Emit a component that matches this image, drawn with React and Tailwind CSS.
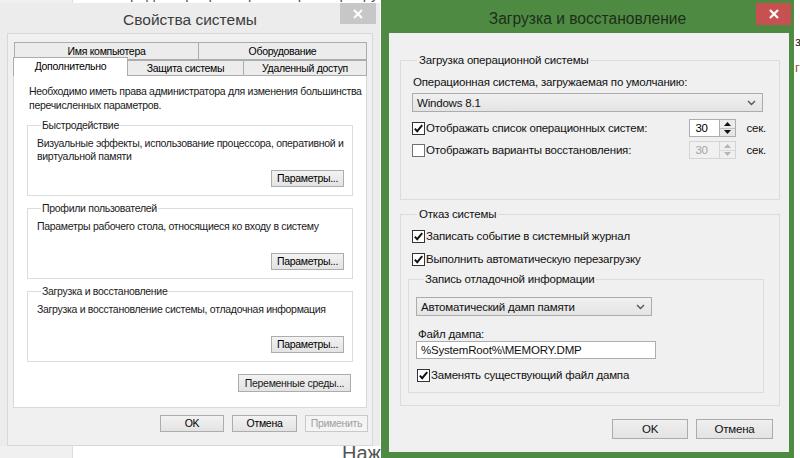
import React from "react";

const Check = ({ checked }) => (
  <span
    className={`flex items-center justify-center w-[13px] h-[13px] shrink-0 bg-white border ${
      checked ? "border-[#333333]" : "border-[#707070]"
    }`}
  >
    {checked && (
      <svg width="11" height="11" viewBox="0 0 11 11">
        <path d="M1.8 5.6 L4.2 8.2 L9.2 2.2" fill="none" stroke="#111" strokeWidth="1.9" />
      </svg>
    )}
  </span>
);

const Chevron = () => (
  <svg width="9" height="6" viewBox="0 0 9 6">
    <path d="M1 1 L4.5 4.5 L8 1" fill="none" stroke="#555" strokeWidth="1.4" />
  </svg>
);

const Arrow = ({ up, disabled }) => (
  <svg width="7" height="4" viewBox="0 0 7 4">
    <path d={up ? "M0 4 L3.5 0 L7 4 Z" : "M0 0 L3.5 4 L7 0 Z"} fill={disabled ? "#b5b5b5" : "#111"} />
  </svg>
);

const Spinner = ({ disabled }) => (
  <div className="flex h-[18px]">
    <div
      className={`w-[31px] flex items-center pl-[5px] border ${
        disabled ? "bg-[#f0f0f0] border-[#d5d5d5] text-[#a3a3a3]" : "bg-white border-[#abadb3] text-black"
      }`}
    >
      30
    </div>
    <div className={`w-[16px] flex flex-col border border-l-0 ${disabled ? "border-[#d5d5d5]" : "border-[#abadb3]"}`}>
      <span
        className={`flex-1 flex items-center justify-center border-b ${
          disabled ? "bg-[#f0f0f0] border-[#dadada]" : "bg-[#ececec] border-[#c0c0c0]"
        }`}
      >
        <Arrow up disabled={disabled} />
      </span>
      <span className={`flex-1 flex items-center justify-center ${disabled ? "bg-[#f0f0f0]" : "bg-[#e6e6e6]"}`}>
        <Arrow disabled={disabled} />
      </span>
    </div>
  </div>
);

const LeftBtn = ({ children, w = "w-[73px]", disabled }) => (
  <button
    className={`${w} h-[17px] flex items-center justify-center border text-[10.5px] leading-none ${
      disabled
        ? "border-[#c9c9c9] bg-[#f4f4f4] text-[#a0a0a0]"
        : "border-[#acacac] bg-gradient-to-b from-[#f2f2f2] to-[#e3e3e3] text-black"
    }`}
  >
    {children}
  </button>
);

const Group = ({ title, children }) => (
  <fieldset className="mx-[13px] border border-[#dcdcdc] px-[8px] pb-[8px]">
    <legend className="ml-[5px] px-[1px] leading-[13px]">{title}</legend>
    <div className="mt-[5px] h-[26px] leading-[13px] pl-[1px] whitespace-nowrap">{children}</div>
    <div className="mt-[7px] flex justify-end">
      <LeftBtn>Параметры...</LeftBtn>
    </div>
  </fieldset>
);

const SystemProperties = () => (
  <div className="absolute left-0 top-[3px] w-[380px] h-[443px] bg-[#ececec] flex flex-col">
    <div className="relative h-[30px] flex items-center justify-center">
      <span className="text-[15.5px] text-[#3d3d3d] pt-[4px]">Свойства системы</span>
      <div className="absolute right-[4px] top-0 w-[36px] h-[21px] bg-[#c7c7c7] flex items-center justify-center">
        <svg width="10" height="10" viewBox="0 0 10 10">
          <path d="M1 1 L9 9 M9 1 L1 9" stroke="#fff" strokeWidth="2" />
        </svg>
      </div>
    </div>

    <div className="mx-[7px] flex-1 bg-[#f0f0f0] border border-[#d8d8d8] pl-[5px] pt-[8px] text-[10.5px] tracking-[-0.3px]">
      {/* tabs */}
      <div className="w-[354px] whitespace-nowrap">
        <div className="flex h-[18px] ml-[1px]">
          <div className="w-[185px] border border-[#acacac] bg-[#ececec] text-center leading-[14px] pt-[1px]">
            Имя компьютера
          </div>
          <div className="w-[168px] border border-l-0 border-[#acacac] bg-[#ececec] text-center leading-[14px] pt-[1px]">
            Оборудование
          </div>
        </div>
        <div className="flex items-end h-[19px] -mt-[3px]">
          <div className="relative z-10 w-[115px] h-[19px] border border-b-0 border-[#acacac] bg-white text-center leading-[16px]">
            Дополнительно
          </div>
          <div className="w-[116px] h-[16px] border border-l-0 border-[#acacac] bg-[#ececec] text-center leading-[14px]">
            Защита системы
          </div>
          <div className="w-[123px] h-[16px] border border-l-0 border-[#acacac] bg-[#ececec] text-center leading-[14px]">
            Удаленный доступ
          </div>
        </div>

        <div className="-mt-px h-[333px] bg-white border border-[#d9d9d9] text-[#1a1a1a]">
          <p className="pt-[8px] pl-[15px] leading-[14px]">
            Необходимо иметь права администратора для изменения большинства
            <br />
            перечисленных параметров.
          </p>

          <div className="mt-[7px]">
            <Group title="Быстродействие">
              Визуальные эффекты, использование процессора, оперативной и
              <br />
              виртуальной памяти
            </Group>
          </div>
          <div className="mt-[6px]">
            <Group title="Профили пользователей">Параметры рабочего стола, относящиеся ко входу в систему</Group>
          </div>
          <div className="mt-[6px]">
            <Group title="Загрузка и восстановление">Загрузка и восстановление системы, отладочная информация</Group>
          </div>

          <div className="mt-[12px] mr-[15px] flex justify-end">
            <button className="w-[113px] h-[18px] border border-[#acacac] bg-gradient-to-b from-[#f2f2f2] to-[#e3e3e3] text-[10.5px] leading-none">
              Переменные среды...
            </button>
          </div>
        </div>
      </div>

      <div className="mt-[7px] mr-[4px] flex justify-end gap-[8px]">
        <LeftBtn w="w-[64px]">OK</LeftBtn>
        <LeftBtn w="w-[65px]">Отмена</LeftBtn>
        <LeftBtn w="w-[63px]" disabled>
          Применить
        </LeftBtn>
      </div>
    </div>
  </div>
);

const Row = ({ checked, children }) => (
  <label className="flex items-center gap-[1px] h-[16px] whitespace-nowrap">
    <Check checked={checked} />
    <span>{children}</span>
  </label>
);

const StartupRecovery = () => (
  <div className="absolute left-[381px] top-0 w-[413px] h-[458px] bg-[#4f8a43] flex flex-col">
    <div className="relative h-[33px] flex items-center justify-center">
      <span className="text-[15.6px] text-[#1d2e1b] pt-[5px]">Загрузка и восстановление</span>
      <div className="absolute right-[3px] top-[3px] w-[35px] h-[22px] bg-[#c75050] flex items-center justify-center">
        <svg width="10" height="10" viewBox="0 0 10 10">
          <path d="M1 1 L9 9 M9 1 L1 9" stroke="#fff" strokeWidth="2.2" />
        </svg>
      </div>
    </div>

    <div className="ml-[8px] mr-[5px] h-[419px] bg-[#f0f0f0] pl-[11px] pr-[9px] pt-[20px] text-[11.5px] tracking-[-0.2px] leading-[14px] text-[#111]">
      <fieldset className="border border-[#dcdcdc] pl-[11px] pr-[16px] pb-[40px]">
        <legend className="ml-[5px] px-[2px]">Загрузка операционной системы</legend>
        <div className="mt-[8px] pl-[1px]">Операционная система, загружаемая по умолчанию:</div>
        <div className="mt-[4px] h-[19px] flex items-center justify-between border border-[#acacac] bg-gradient-to-b from-[#f0f0f0] to-[#e4e4e4] pl-[4px] pr-[6px]">
          <span>Windows 8.1</span>
          <Chevron />
        </div>
        <div className="mt-[7px] h-[18px] flex items-center">
          <Row checked>Отображать список операционных систем:</Row>
          <div className="ml-auto flex items-center -mr-[3px]">
            <Spinner />
            <span className="ml-[10px]">сек.</span>
          </div>
        </div>
        <div className="mt-[4px] h-[18px] flex items-center">
          <Row>Отображать варианты восстановления:</Row>
          <div className="ml-auto flex items-center -mr-[3px]">
            <Spinner disabled />
            <span className="ml-[10px]">сек.</span>
          </div>
        </div>
      </fieldset>

      <fieldset className="mt-[7px] border border-[#dcdcdc] pl-[11px] pr-[15px] pb-[12px]">
        <legend className="ml-[5px] px-[2px]">Отказ системы</legend>
        <div className="mt-[7px]">
          <Row checked>Записать событие в системный журнал</Row>
        </div>
        <div className="mt-[7px]">
          <Row checked>Выполнить автоматическую перезагрузку</Row>
        </div>
        <fieldset className="mt-[5px] -ml-[4px] border border-[#dcdcdc] pl-[7px] pr-[8px] pb-[9px]">
          <legend className="ml-[8px] px-[1px]">Запись отладочной информации</legend>
          <div className="mt-[11px] w-[236px] h-[19px] flex items-center justify-between border border-[#acacac] bg-gradient-to-b from-[#f0f0f0] to-[#e4e4e4] pl-[4px] pr-[6px]">
            <span>Автоматический дамп памяти</span>
            <Chevron />
          </div>
          <div className="mt-[11px] pl-[2px]">Файл дампа:</div>
          <div className="w-[240px] h-[18px] flex items-center border border-[#abadb3] bg-white pl-[4px]">
            %SystemRoot%\MEMORY.DMP
          </div>
          <div className="mt-[8px] pl-[1px]">
            <Row checked>Заменять существующий файл дампа</Row>
          </div>
        </fieldset>
      </fieldset>

      <div className="mt-[13px] mr-[7px] flex justify-end gap-[8px]">
        <button className="w-[76px] h-[20px] border border-[#acacac] bg-gradient-to-b from-[#efefef] to-[#e3e3e3]">OK</button>
        <button className="w-[77px] h-[20px] border border-[#acacac] bg-gradient-to-b from-[#efefef] to-[#e3e3e3]">Отмена</button>
      </div>
    </div>
  </div>
);

export default function App() {
  return (
    <div className="relative w-[800px] h-[458px] overflow-hidden bg-white font-['Liberation_Sans',Arial,sans-serif] text-black">
      {/* desktop behind the dialogs */}
      <div className="flex h-full">
        <div className="w-[73px] bg-[#f0f0f0] border-r border-[#dedede]" />
        <div className="flex-1 bg-white" />
      </div>
      <div className="absolute left-[130px] -top-[14px] text-[15px] leading-none text-[#555] whitespace-nowrap">
        редакторы реестра и параметры ру
      </div>
      <div className="absolute left-[342px] top-[443px] text-[20px] leading-none text-[#555]">Нажм</div>
      <div className="absolute left-[795px] top-[34px] flex flex-col text-[13px] leading-[16px]">
        <span className="text-[#222]">з</span>
        <span className="mt-[10px] text-[#8b5a2b]">г</span>
      </div>

      <SystemProperties />
      <StartupRecovery />
    </div>
  );
}
